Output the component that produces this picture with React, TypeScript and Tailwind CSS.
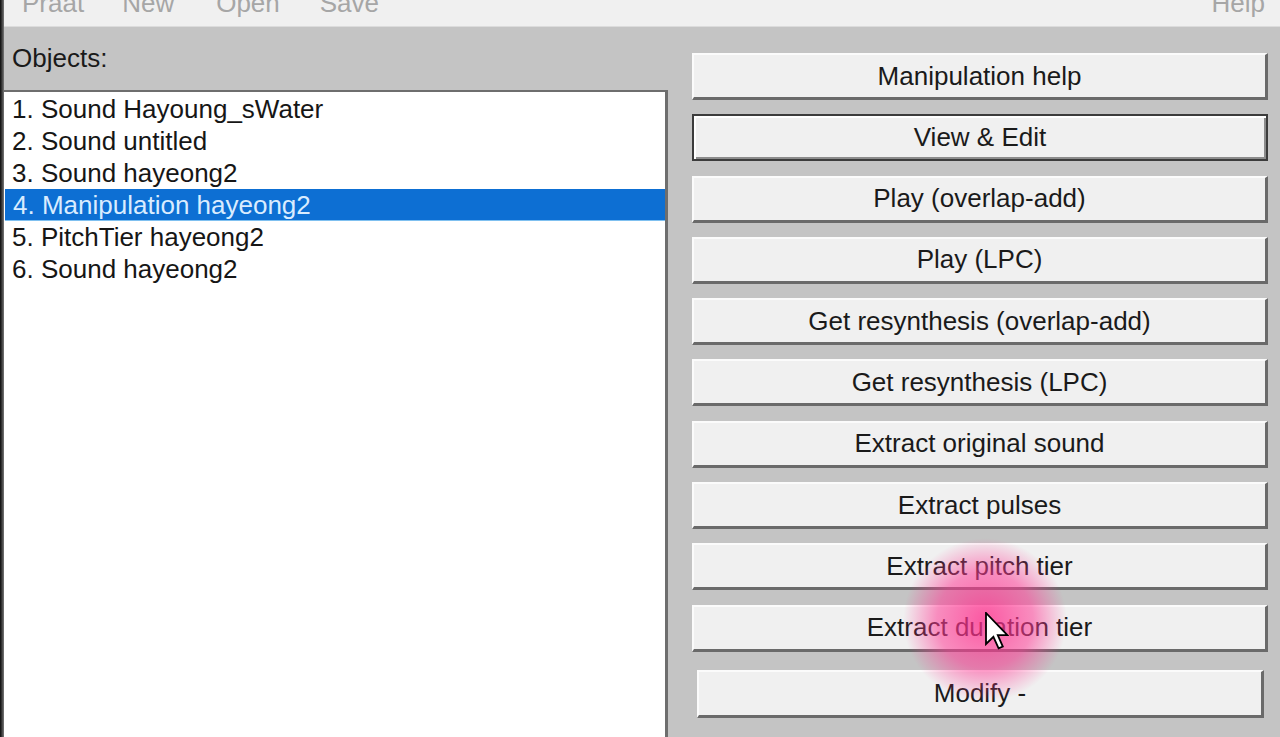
import React from "react";

const objects = [
  "1. Sound Hayoung_sWater",
  "2. Sound untitled",
  "3. Sound hayeong2",
  "4. Manipulation hayeong2",
  "5. PitchTier hayeong2",
  "6. Sound hayeong2",
];

const actions = [
  "Manipulation help",
  "View & Edit",
  "Play (overlap-add)",
  "Play (LPC)",
  "Get resynthesis (overlap-add)",
  "Get resynthesis (LPC)",
  "Extract original sound",
  "Extract pulses",
  "Extract pitch tier",
  "Extract duration tier",
];

const ActionButton = ({ label, isDefault }: { label: string; isDefault?: boolean }) => {
  if (isDefault) {
    return (
      <div className="h-[47px] w-[576px] shrink-0 flex items-center justify-center bg-[#f0f0f0] border-2 border-[#3c3c3c] shadow-[inset_2px_2px_0_#ffffff,inset_-2px_-2px_0_#8c8c8c] text-[#1a1a1a]">
        {label}
      </div>
    );
  }
  return (
    <div className="h-[47px] w-[576px] shrink-0 flex items-center justify-center bg-[#f0f0f0] border-t-2 border-l-2 border-t-[#fbfbfb] border-l-[#fbfbfb] border-r-[3px] border-b-[3px] border-r-[#6a6a6a] border-b-[#6a6a6a] text-[#1a1a1a]">
      {label}
    </div>
  );
};

export default function App() {
  return (
    <div className="relative w-[1280px] h-[737px] overflow-hidden flex bg-[#c4c4c4] text-[26px] font-['Liberation_Sans',Arial,sans-serif]">
      {/* window edge */}
      <div className="w-[4px] shrink-0 bg-gradient-to-r from-[#0c0c0c] to-[#7a7a7a]" />

      <div className="flex-1 flex flex-col">
        {/* menu bar, scrolled partly out of view */}
        <div className="h-[27px] shrink-0 overflow-hidden bg-[#f0f0f0] border-b border-[#dcdcdc] text-[#a6a6a6]">
          <div className="flex leading-[26px] -mt-[10px]">
            <span className="ml-[18px]">Praat</span>
            <span className="ml-[38px]">New</span>
            <span className="ml-[42px]">Open</span>
            <span className="ml-[40px]">Save</span>
            <span className="ml-auto mr-[15px]">Help</span>
          </div>
        </div>

        <div className="flex-1 flex min-h-0">
          {/* objects list */}
          <div className="w-[664px] shrink-0 flex flex-col">
            <div className="h-[63px] flex items-center pl-[8px] text-[#1a1a1a]">Objects:</div>
            <div className="flex-1 bg-white border-t-2 border-r-[3px] border-[#6e6e6e] pt-[1px]">
              {objects.map((o, i) =>
                i === 3 ? (
                  <div key={o} className="h-[32px] leading-[33px] pl-[8px] ml-[1px] bg-[#0d6fd3] text-[#d9ecff] border-b border-[#7fc0f0]">
                    {o}
                  </div>
                ) : (
                  <div key={o} className="h-[32px] leading-[33px] pl-[8px] text-[#161616]">
                    {o}
                  </div>
                )
              )}
            </div>
          </div>

          {/* action buttons */}
          <div className="flex-1 flex flex-col gap-[14.3px] pl-[24px] pt-[26px]">
            {actions.map((a, i) => (
              <ActionButton key={a} label={a} isDefault={i === 1} />
            ))}
            <div className="mt-[4px] ml-[5px] h-[48px] w-[567px] shrink-0 flex items-center justify-center bg-[#f0f0f0] border-t-2 border-l-2 border-t-[#fbfbfb] border-l-[#fbfbfb] border-r-[3px] border-b-[3px] border-r-[#6a6a6a] border-b-[#6a6a6a] text-[#1a1a1a]">
              Modify -
            </div>
          </div>
        </div>
      </div>

      {/* click highlight */}
      <div className="absolute left-[900px] top-[535px] w-[170px] h-[170px] rounded-full pointer-events-none bg-[radial-gradient(circle,rgba(255,45,140,0.78)_0%,rgba(255,60,150,0.55)_40%,rgba(255,90,165,0)_68%)]" />

      {/* mouse pointer */}
      <svg className="absolute left-[985px] top-[612px]" width="24" height="38" viewBox="0 0 12 19">
        <path d="M0.5 0.5 L0.5 16 L4.2 12.4 L6.8 18.2 L8.9 17.3 L6.4 11.6 L11.2 11.6 Z" fill="#ffffff" stroke="#000000" strokeWidth="0.9" strokeLinejoin="miter" />
      </svg>
    </div>
  );
}
